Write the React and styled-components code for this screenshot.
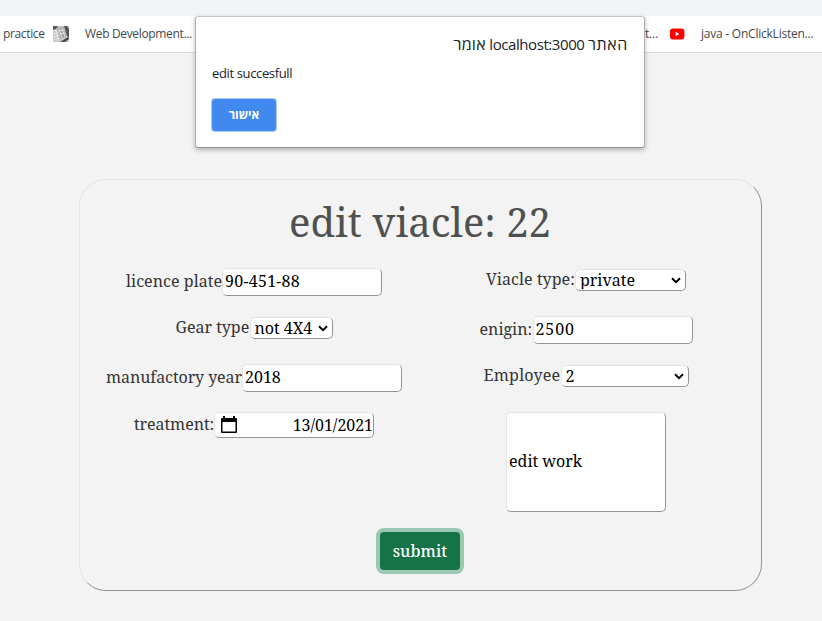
import React from 'react';
import styled, { createGlobalStyle, css } from 'styled-components';

const sans = '"Open Sans", "Noto Sans", sans-serif';
const serif = '"Noto Serif", "DejaVu Serif Condensed", "DejaVu Serif", serif';

const GlobalStyle = createGlobalStyle`
  * { box-sizing: border-box; }
  body { margin: 0; background: #f3f3f3; overflow: hidden; }
`;

const Page = styled.div`
  height: 621px;
  overflow: hidden;
  background: #f3f3f3;
  font-family: ${serif};
`;

const TabStrip = styled.div`
  height: 16px;
  background: #f1f3f5;
`;

const BookmarkBar = styled.nav`
  height: 37px;
  display: flex;
  align-items: center;
  justify-content: space-between;
  padding: 0 9px 1px 3px;
  background: #fff;
  border-bottom: 1px solid #d9dbe0;
  font: 12px/18px ${sans};
  color: #45484c;
  white-space: nowrap;
`;

const BookmarkGroup = styled.div`
  display: flex;
  align-items: center;
  svg { display: block; flex: none; }
`;

const Bookmark = styled.span`
  width: ${p => p.$w}px;
  margin-left: ${p => p.$gap || 0}px;
  letter-spacing: ${p => p.$track}px;
`;

const Dialog = styled.section`
  position: absolute;
  left: 195px;
  top: 16px;
  width: 450px;
  height: 132px;
  padding: 15px 16px 0 15px;
  background: #fff;
  border: 1px solid;
  border-color: #c6c6c6 #adadad #929292 #adadad;
  border-radius: 3px;
  box-shadow: 0 2px 5px rgba(0, 0, 0, 0.28);
  font-family: ${sans};
  color: #202124;
`;

const DialogTitle = styled.h2`
  margin: 0;
  font-size: 15px;
  line-height: 24px;
  font-weight: 400;
  letter-spacing: -0.42px;
  white-space: nowrap;
`;

const Hebrew = styled.span`
  font-size: 16px;
  letter-spacing: ${p => p.$track}px;
`;

const DialogText = styled.p`
  margin: 7px 0 15px 1px;
  font-size: 13px;
  line-height: 20px;
  letter-spacing: -0.36px;
`;

const DialogButton = styled.button`
  display: block;
  width: 66px;
  height: 34px;
  padding: 0;
  border: 1px solid #a9cbf8;
  border-radius: 4px;
  background: #4089ee;
  color: #fff;
  font: 700 12px/20px ${sans};
`;

const outset = css`
  border: 1px solid;
  border-color: #e4e4e4 #949494 #949494 #e4e4e4;
`;

const Card = styled.main`
  width: 683px;
  height: 412px;
  margin: 126px 0 0 79px;
  padding: 12px 8px 0;
  ${outset}
  border-radius: 27px;
  text-align: center;
`;

const Title = styled.h1`
  margin: 0 1px 0 0;
  font-size: 40px;
  line-height: 60px;
  font-weight: 400;
  color: #505050;
`;

const FieldGrid = styled.div`
  display: grid;
  grid-template-columns: 332px 332px;
  grid-template-rows: 48px 48px 48px 116px;
  margin-top: 16px;
`;

const Field = styled.label`
  display: flex;
  justify-content: center;
  align-items: flex-start;
  font-size: 16px;
  color: #333;
`;

const LabelText = styled.span`
  width: ${p => p.$w}px;
  line-height: 24px;
  margin-top: ${p => p.$top || 0}px;
  letter-spacing: ${p => p.$track || 0}px;
  text-align: left;
  white-space: nowrap;
`;

const control = css`
  display: block;
  margin: 0;
  font: 16px/24px ${serif};
  color: #000;
  background: #fff;
  ${outset}
  border-radius: 5px;
  outline: 0;
`;

const TextInput = styled.input`
  ${control}
  width: 160px;
  height: ${p => p.$h || 28}px;
  padding: 0 2px 2px;
  letter-spacing: ${p => p.$track || 0}px;
`;

const SelectWrap = styled.span`
  display: flex;
  align-items: center;
  width: ${p => p.$w}px;
  height: 22px;
  margin-top: 1px;
  svg { flex: none; margin-left: -15px; pointer-events: none; }
`;

const Select = styled.select`
  ${control}
  appearance: none;
  width: 100%;
  height: 22px;
  padding: 0 0 1px 4px;
  line-height: 20px;
`;

const DateBox = styled.span`
  ${control}
  display: flex;
  align-items: center;
  justify-content: space-between;
  width: 160px;
  height: 26px;
  padding: 0 0 1px 6px;
  white-space: nowrap;
  letter-spacing: -0.05px;
  svg { flex: none; }
`;

const SubmitButton = styled.button`
  display: block;
  width: 80px;
  height: 38px;
  margin: 4px auto 0 292px;
  padding: 0 0 1px;
  border: 0;
  border-radius: 4px;
  background: #157347;
  box-shadow: 0 0 0 4px #9bc8b3;
  color: #fff;
  font: 500 16px/24px ${serif};
  letter-spacing: 0.1px;
`;

const KeyboardIcon = () => (
  <svg width="16" height="16" viewBox="0 0 16 16">
    <path d="M0 0H16V16H0Z" fill="#c9c9c9" />
    <path d="M0 0H5L3 3L0 4ZM11 0H14L16 3V11L14 10Z" fill="#555" />
    <path d="M13 4L16 13L12 16H7L15 11Z" fill="#4a4a4a" />
    <path d="M4 2L11 1L14 10L7 13Z" fill="#a4a4a4" />
    <path d="M0 5L4 4M0 8L6 6M0 11L7 9M0 14L7 12M3 4L5 15M6 2L9 12M9 2L12 11M5 5L12 4M6 8L13 7" stroke="#e9e9e9" strokeWidth=".8" />
  </svg>
);

const VideoIcon = () => (
  <svg width="15" height="12" viewBox="0 0 15 12">
    <rect x="0" y=".5" width="14.4" height="11" rx="3" fill="#f00" />
    <path d="M5.6 3.7V8.3L9.4 6Z" fill="#fff" />
  </svg>
);

const Chevron = () => (
  <svg width="10" height="7" viewBox="0 0 10 7">
    <path d="M1 1.3L5 5.1L9 1.3" fill="none" stroke="#000" strokeWidth="2" />
  </svg>
);

const CalendarIcon = () => (
  <svg width="16" height="18" viewBox="0 0 16 18">
    <path d="M0 3Q0 2 1 2H2V0H4V2H12V0H14V2H15Q16 2 16 3V16Q16 17 15 17H1Q0 17 0 16ZM1.5 6V15.5H14.5V6Z" fill="#000" fillRule="evenodd" />
  </svg>
);

function SelectField({ label, w, track, boxW, value }) {
  return (
    <Field>
      <LabelText $w={w} $top={-1} $track={track}>{label}</LabelText>
      <SelectWrap $w={boxW}>
        <Select defaultValue={value}><option>{value}</option></Select>
        <Chevron />
      </SelectWrap>
    </Field>
  );
}

function InputField({ label, w, track, value, valueTrack }) {
  return (
    <Field>
      <LabelText $w={w} $top={1} $track={track}>{label}</LabelText>
      <TextInput defaultValue={value} $track={valueTrack} />
    </Field>
  );
}

export default function App() {
  return (
    <Page>
      <GlobalStyle />
      <TabStrip />
      <BookmarkBar>
        <BookmarkGroup>
          <Bookmark $w={50} $track={-0.35}>practice</Bookmark>
          <KeyboardIcon />
          <Bookmark $w={108} $gap={16} $track={-0.34}>Web Development...</Bookmark>
        </BookmarkGroup>
        <BookmarkGroup>
          <Bookmark $w={25} $track={-0.2}>t...</Bookmark>
          <VideoIcon />
          <Bookmark $w={112} $gap={16} $track={-0.23}>java - OnClickListen...</Bookmark>
        </BookmarkGroup>
      </BookmarkBar>
      <Card>
        <Title>edit viacle: 22</Title>
        <FieldGrid>
          <InputField label="licence plate" w={96} track={0.05} value="90-451-88" valueTrack={0.28} />
          <SelectField label="Viacle type:" w={89} track={0.06} value="private" boxW={111} />
          <SelectField label="Gear type" w={74} value="not 4X4" boxW={83} />
          <InputField label="enigin:" w={53} value="2500" valueTrack={0.9} />
          <InputField label="manufactory year" w={136} track={-0.07} value="2018" />
          <SelectField label="Employee" w={77} track={0.24} value="2" boxW={128} />
          <Field>
            <LabelText $w={80} $track={-0.05}>treatment:</LabelText>
            <DateBox><CalendarIcon /><span>13/01/2021</span></DateBox>
          </Field>
          <Field>
            <TextInput $h={100} defaultValue="edit work" aria-label="work" />
          </Field>
        </FieldGrid>
        <SubmitButton>submit</SubmitButton>
      </Card>
      <Dialog>
        <DialogTitle dir="rtl">
          <Hebrew $track={0.6}>האתר</Hebrew> <bdi>localhost:3000</bdi> <Hebrew $track={0.25}>אומר</Hebrew>
        </DialogTitle>
        <DialogText>edit succesfull</DialogText>
        <DialogButton>אישור</DialogButton>
      </Dialog>
    </Page>
  );
}
